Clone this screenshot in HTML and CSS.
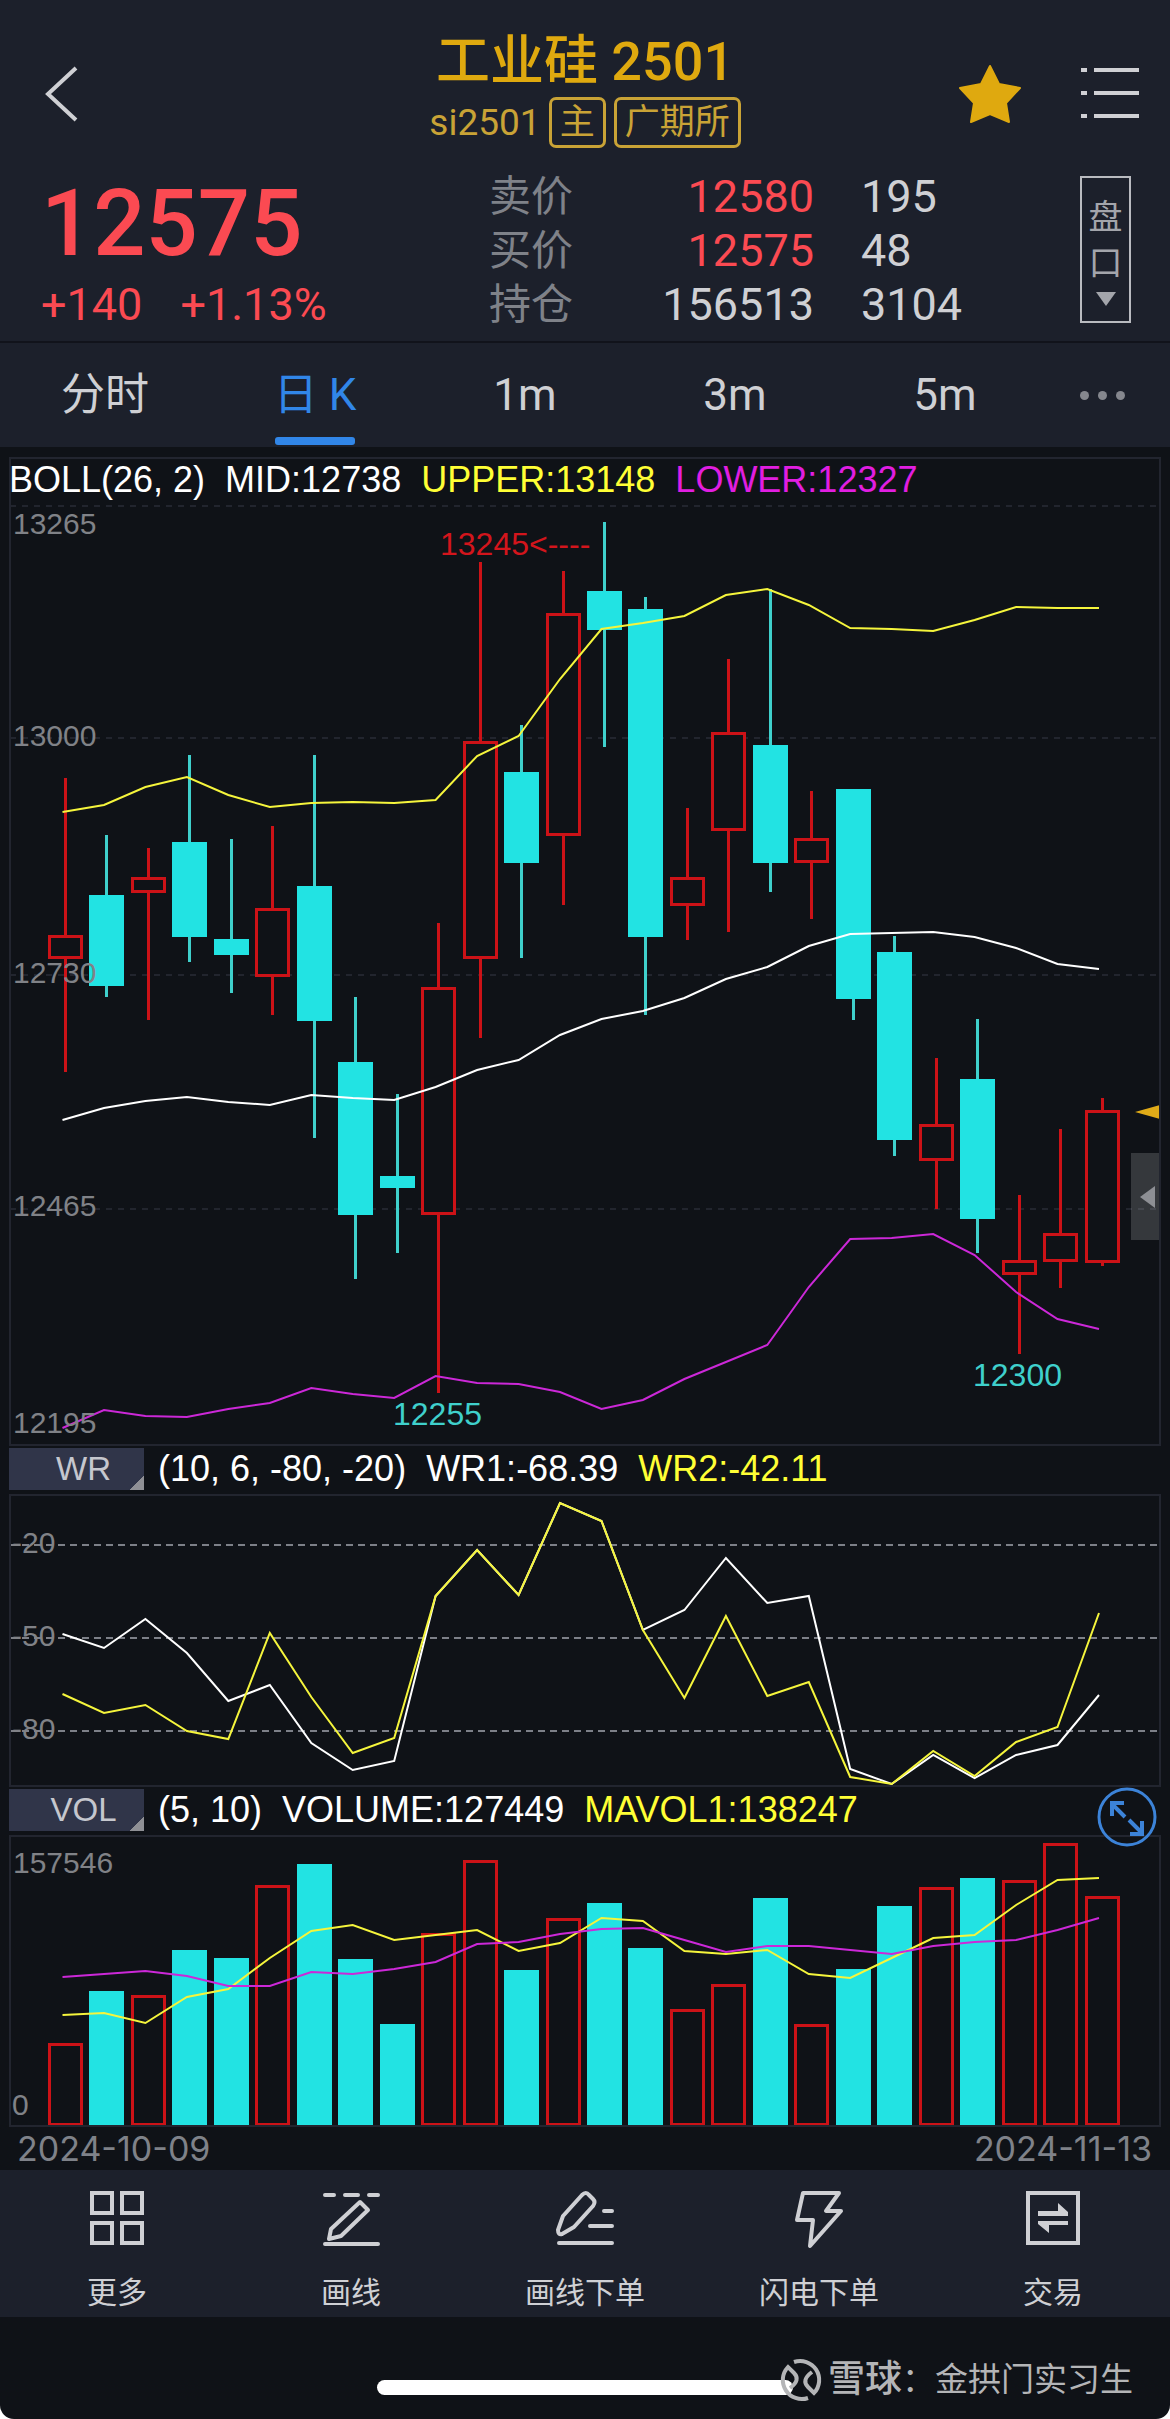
FILE: index.html
```html
<!DOCTYPE html>
<html lang="zh-CN">
<head>
    <meta charset="UTF-8">
    <meta name="viewport" content="width=device-width, initial-scale=1.0">
    <title>工业硅2501</title>
    <link rel="stylesheet" href="styles.css">
</head>
<body>
    <div class="page">
        <header class="header">
            <button class="icon-btn back" aria-label="返回">
                <svg width="60" height="60" viewBox="0 0 60 60"><path d="M46 8 L18 34 L46 60" class="line"/></svg>
            </button>
            <div class="title">
                <h1>工业硅 2501</h1>
                <div class="sub">
                    <span class="code">si2501</span>
                    <span class="tag">主</span>
                    <span class="tag">广期所</span>
                </div>
            </div>
            <div class="actions">
                <button class="icon-btn" aria-label="自选">
                    <svg width="64" height="60" viewBox="0 0 64 60"><path class="star" d="M32 6 L41 24 L62 28 L48 43 L51 62 L32 54 L13 62 L16 43 L2 28 L23 24 Z"/></svg>
                </button>
                <button class="icon-btn" aria-label="列表">
                    <svg width="60" height="60" viewBox="0 0 60 60"><path d="M1 10H7M14 10H59M1 33H7M14 33H59M1 56H7M14 56H59" class="line"/></svg>
                </button>
            </div>
        </header>

        <section class="quote">
            <div class="last">
                <div class="price">12575</div>
                <div class="change"><span>+140</span><span>+1.13%</span></div>
            </div>
            <table class="book">
                <tr><th>卖价</th><td class="num up">12580</td><td>195</td></tr>
                <tr><th>买价</th><td class="num up">12575</td><td>48</td></tr>
                <tr><th>持仓</th><td class="num">156513</td><td>3104</td></tr>
            </table>
            <button class="depth"><span>盘</span><span>口</span><i class="caret"></i></button>
        </section>

        <nav class="tabs">
            <button>分时</button>
            <button class="active">日 K</button>
            <button>1m</button>
            <button>3m</button>
            <button>5m</button>
            <button class="dots" aria-label="更多周期"><i></i><i></i><i></i></button>
        </nav>

        <main class="charts">
            <section class="panel">
                <div class="legend">
                    <span>BOLL(26, 2)</span><span>MID:12738</span><span class="yellow">UPPER:13148</span><span class="magenta">LOWER:12327</span>
                </div>
                <svg id="kline" viewBox="9 505 1152 941"></svg>
            </section>

            <div class="legend">
                <button class="indicator">WR</button>
                <span>(10, 6, -80, -20)</span><span>WR1:-68.39</span><span class="yellow">WR2:-42.11</span>
            </div>
            <section class="panel">
                <svg id="wr" viewBox="9 1494 1152 293"></svg>
            </section>

            <div class="legend">
                <button class="indicator">VOL</button>
                <span>(5, 10)</span><span>VOLUME:127449</span><span class="yellow">MAVOL1:138247</span>
                <button class="expand" aria-label="全屏">
                    <svg width="60" height="60" viewBox="0 0 60 60">
                        <circle cx="30" cy="30" r="28"/>
                        <path d="M28 30 L15 17 M15 29 V16 H27 M32 33 L45 46 M45 34 V47 H33"/>
                    </svg>
                </button>
            </div>
            <section class="panel">
                <svg id="vol" viewBox="9 1835 1152 292"></svg>
            </section>
            <div class="dates"><span>2024-10-09</span><span>2024-11-13</span></div>
        </main>

        <nav class="toolbar">
            <button>
                <svg width="60" height="60" viewBox="0 0 60 60"><path class="line" d="M5 5H25V25H5Z M35 5H55V25H35Z M5 35H25V55H5Z M35 35H55V55H35Z"/></svg>
                更多
            </button>
            <button>
                <svg width="60" height="60" viewBox="0 0 60 60"><path class="line round" d="M4 7H13M24 7H37M48 7H57M4 56H57M39 14 L47 22 L20 48 L8 51 L10 41 Z"/></svg>
                画线
            </button>
            <button>
                <svg width="60" height="60" viewBox="0 0 60 60"><path class="line round" d="M4 55H57M35 38H57M49 23H57M8 28 L27 7 Q31 3 34 7 L38 11 Q41 14 38 18 L19 39 L7 46 Q3 47 3 42 Z"/></svg>
                画线下单
            </button>
            <button>
                <svg width="60" height="60" viewBox="0 0 60 60"><path class="line round" d="M14 5H50L37 23H52L21 58L24 32H8Z"/></svg>
                闪电下单
            </button>
            <button>
                <svg width="60" height="60" viewBox="0 0 60 60">
                    <path class="line" d="M5 5H55V55H5Z"/>
                    <path class="solid" d="M15 23H35V15L45 24V28H15Z M45 37H26V45L15 36V33H45Z"/>
                </svg>
                交易
            </button>
        </nav>

        <footer class="bottom">
            <div class="home-bar"></div>
            <div class="watermark">
                <svg width="42" height="42" viewBox="0 0 42 42">
                    <path d="M14 3 A19 19 0 0 1 34 34 L28 28 Q21 21 32 13 M28 39 A19 19 0 0 1 8 8 L14 14 Q21 21 10 29"/>
                </svg>
                <span class="brand">雪球</span><span>：金拱门实习生</span>
            </div>
        </footer>
    </div>
    <script src="script.js"></script>
</body>
</html>
```

FILE: styles.css
```css
:root {
    --bar: #1c202b;
    --bg: #0f1217;
    --gold: #dfa90f;
    --gold-soft: #c9a336;
    --red: #fb4a52;
    --text: #cfd0d4;
    --muted: #7f8289;
    --blue: #3186e8;
    --frame: #22252f;
}
* {
    box-sizing: border-box;
}
body {
    margin: 0;
    background: #fff;
    font-family: Roboto, "Noto Sans CJK SC", sans-serif;
    color: var(--text);
}
button {
    padding: 0;
    border: 0;
    background: none;
    color: inherit;
    font: inherit;
    cursor: pointer;
}
.page {
    background: var(--bg);
    border-radius: 0 0 14px 14px;
    overflow: hidden;
}
svg {
    display: block;
    overflow: visible;
}
.line {
    fill: none;
    stroke: var(--text);
    stroke-width: 4;
}
.round {
    stroke-linecap: round;
    stroke-linejoin: round;
}
.solid {
    fill: var(--text);
}

/* header */
.header {
    display: grid;
    grid-template-columns: 1fr auto 1fr;
    align-items: center;
    padding: 32px 30px 0 30px;
    background: var(--bar);
}
.icon-btn {
    justify-self: start;
}
.star {
    fill: var(--gold);
    stroke: var(--gold);
    stroke-width: 2;
    stroke-linejoin: round;
}
.title h1 {
    margin: 0;
    font-size: 54px;
    line-height: 60px;
    font-weight: 500;
    text-align: center;
    color: var(--gold);
}
.sub {
    display: flex;
    justify-content: center;
    align-items: center;
    gap: 8px;
    margin-top: 5px;
    font-size: 35px;
    color: var(--gold-soft);
}
.code {
    font-size: 37px;
}
.tag {
    height: 51px;
    padding: 0 8px;
    border: 3px solid var(--gold-soft);
    border-radius: 7px;
    line-height: 45px;
}
.actions {
    display: flex;
    justify-content: flex-end;
    gap: 58px;
}

/* quote */
.quote {
    display: grid;
    grid-template-columns: 1fr 591px 51px;
    padding: 22px 39px 9px 41px;
    background: var(--bar);
}
.last {
    color: var(--red);
}
.price {
    font-size: 92px;
    line-height: 108px;
    font-weight: 500;
}
.change {
    display: flex;
    gap: 38px;
    font-size: 45px;
    line-height: 54px;
}
.book {
    border-collapse: collapse;
    font-size: 45px;
    line-height: 54px;
}
.book th, .book td {
    height: 54px;
    padding: 0;
    text-align: left;
    font-weight: normal;
}
.book th {
    width: 100px;
    font-size: 42px;
    color: var(--muted);
}
.book .num {
    width: 272px;
    padding-right: 47px;
    text-align: right;
}
.book .up {
    color: var(--red);
}
.depth {
    display: flex;
    flex-direction: column;
    align-items: center;
    justify-content: center;
    margin: 6px 0 9px;
    border: 2px solid #b9bbc0;
    font-size: 34px;
    line-height: 46px;
    color: #a3a5ab;
}
.caret {
    margin-top: 6px;
    border: 10px solid transparent;
    border-top: 14px solid #a3a5ab;
    border-bottom: 0;
}

/* period tabs */
.tabs {
    display: grid;
    grid-template-columns: repeat(5, 7fr) 4fr;
    height: 106px;
    border-top: 2px solid #11131b;
    background: var(--bar);
    font-size: 44px;
    line-height: 52px;
}
.tabs .active {
    position: relative;
    color: var(--blue);
}
.tabs .active::after {
    content: "";
    position: absolute;
    left: 50%;
    bottom: 2px;
    width: 80px;
    height: 8px;
    margin-left: -40px;
    border-radius: 3px;
    background: var(--blue);
}
.dots {
    display: flex;
    align-items: center;
    justify-content: center;
    gap: 9px;
    padding-right: 16px;
}
.dots i {
    width: 9px;
    height: 9px;
    border-radius: 50%;
    background: #85878e;
}

/* charts */
.charts {
    padding: 10px 9px 0;
    font-family: "Liberation Sans", Arial, sans-serif;
}
.panel {
    outline: 2px solid var(--frame);
    outline-offset: -2px;
}
.panel svg {
    width: 100%;
    height: auto;
}
.legend {
    position: relative;
    display: flex;
    align-items: center;
    gap: 20px;
    height: 48px;
    padding-bottom: 2px;
    font-size: 36px;
    color: #fff;
    white-space: nowrap;
}
.yellow {
    color: #ffff35;
}
.magenta {
    color: #e11ee1;
}
.indicator {
    width: 135px;
    height: 42px;
    margin-right: -6px;
    padding-left: 14px;
    background: linear-gradient(135deg, transparent 115px, #8f9095 115px) #303549;
    font-size: 33px;
    color: #c5c7ce;
}
.expand {
    position: absolute;
    right: 4px;
    top: 0;
}
.expand svg {
    fill: none;
    stroke: #3c83d8;
    stroke-width: 3;
}
.expand path {
    stroke-width: 4;
}
.dates {
    display: flex;
    justify-content: space-between;
    padding: 0 9px 0 8px;
    font-family: Inter, sans-serif;
    font-size: 34px;
    line-height: 43px;
    color: var(--muted);
}

/* chart marks */
.up-bar {
    fill: #0f1217;
    stroke: #cc1217;
    stroke-width: 3;
}
.down-bar {
    fill: #22e3e3;
}
.up-wick, .down-wick {
    stroke: #cc1217;
    stroke-width: 3;
}
.down-wick {
    stroke: #3fd0cc;
}
.curve {
    fill: none;
    stroke: #fff;
    stroke-width: 2;
}
.curve.c-yellow {
    stroke: #f5f53c;
}
.curve.c-magenta {
    stroke: #cc28d8;
}
.grid-line {
    stroke: #22252e;
    stroke-width: 2;
    stroke-dasharray: 6 6;
}
.grid-line.strong {
    stroke: #7d8088;
    stroke-dasharray: 7 5;
}
.axis {
    fill: #808287;
    font-size: 30px;
}
.mark {
    font-size: 32px;
    fill: #3fd0cc;
}
.mark.high {
    fill: #d3151c;
}
.pointer {
    fill: #e0ab18;
}
.drawer {
    fill: #fff;
    fill-opacity: 0.16;
}
.drawer-arrow {
    fill: #8d8f94;
}

/* bottom toolbar */
.toolbar {
    display: grid;
    grid-template-columns: repeat(5, 1fr);
    height: 147px;
    background: var(--bar);
    font-size: 30px;
}
.toolbar button {
    display: flex;
    flex-direction: column;
    align-items: center;
    padding-top: 18px;
    line-height: 44px;
    gap: 23px;
}
.bottom {
    position: relative;
    height: 102px;
}
.home-bar {
    position: absolute;
    left: 50%;
    bottom: 24px;
    width: 416px;
    height: 15px;
    margin-left: -208px;
    border-radius: 8px;
    background: #fff;
}
.watermark {
    position: absolute;
    right: 37px;
    bottom: 17px;
    display: flex;
    align-items: center;
    font-size: 33px;
    line-height: 44px;
    color: #b4b5b7;
}
.watermark svg {
    margin-right: 6px;
    fill: none;
    stroke: #b4b5b7;
    stroke-width: 4;
}
.brand {
    font-size: 37px;
    font-weight: 500;
}
```

FILE: script.js
```js
const STEP = 41.46;
const BAR_X = 65.5;   // centre of the first candle
const LINE_X = 62.5;

// [up?, high, body top, body bottom, low]
const candles = [
    [1, 778, 935, 959, 1072], [0, 835, 895, 986, 997], [1, 848, 877, 893, 1020],
    [0, 755, 842, 937, 962], [0, 839, 939, 955, 993], [1, 826, 908, 977, 1015],
    [0, 755, 886, 1021, 1138], [0, 997, 1062, 1215, 1279], [0, 1094, 1176, 1188, 1253],
    [1, 923, 987, 1215, 1393], [1, 562, 741, 959, 1038], [0, 725, 772, 863, 958],
    [1, 571, 613, 836, 905], [0, 522, 591, 630, 747], [0, 597, 609, 937, 1015],
    [1, 808, 877, 906, 940], [1, 659, 732, 831, 932], [0, 589, 745, 863, 892],
    [1, 791, 838, 863, 919], [0, 789, 789, 999, 1020], [0, 936, 952, 1140, 1156],
    [1, 1058, 1124, 1161, 1209], [0, 1019, 1079, 1219, 1253], [1, 1195, 1260, 1275, 1354],
    [1, 1129, 1233, 1262, 1288], [1, 1098, 1110, 1263, 1266]
];
const upper = [812, 805, 787, 777, 795, 807, 803, 802, 803, 800, 756, 736, 679, 629, 623, 616, 595, 589, 605, 628, 629, 631, 620, 607, 608, 608];
const mid = [1120, 1108, 1101, 1097, 1102, 1105, 1095, 1098, 1100, 1087, 1070, 1060, 1035, 1019, 1011, 998, 979, 967, 946, 934, 933, 932, 937, 948, 964, 969];
const lower = [1428, 1410, 1416, 1417, 1409, 1403, 1388, 1394, 1398, 1376, 1383, 1384, 1392, 1409, 1400, 1379, 1362, 1345, 1287, 1239, 1238, 1234, 1255, 1292, 1319, 1329];

const wr1 = [1634, 1648, 1619, 1653, 1701, 1685, 1743, 1770, 1761, 1596, 1550, 1595, 1503, 1521, 1630, 1610, 1558, 1603, 1596, 1769, 1784, 1755, 1778, 1755, 1745, 1695];
const wr2 = [1694, 1713, 1705, 1731, 1739, 1633, 1697, 1753, 1738, 1596, 1550, 1595, 1503, 1521, 1630, 1698, 1616, 1696, 1682, 1777, 1784, 1751, 1776, 1742, 1727, 1613];

const volume = [2043, 1991, 1995, 1950, 1958, 1885, 1864, 1959, 2024, 1933, 1860, 1970, 1918, 1903, 1948, 2009, 1984, 1898, 2024, 1969, 1906, 1887, 1878, 1880, 1843, 1896];
const ma1 = [2015, 2013, 2023, 1997, 1989, 1958, 1931, 1925, 1940, 1935, 1930, 1951, 1943, 1918, 1921, 1951, 1954, 1950, 1974, 1978, 1958, 1938, 1935, 1905, 1880, 1878];
const ma2 = [1977, 1974, 1971, 1976, 1986, 1986, 1972, 1974, 1969, 1962, 1944, 1942, 1934, 1929, 1928, 1940, 1952, 1946, 1946, 1950, 1954, 1946, 1942, 1940, 1930, 1918];

function bar(i, up, top, bottom) {
    const x = Math.round(BAR_X + i * STEP - 17.5);
    if (up) {
        return `<rect class="up-bar" x="${x + 1.5}" y="${top + 1.5}" width="32" height="${bottom - top - 3}"/>`;
    }
    return `<rect class="down-bar" x="${x}" y="${top}" width="35" height="${bottom - top}"/>`;
}

function wick(i, up, high, low) {
    const x = Math.round(BAR_X + i * STEP - 17.5) + 17.5;
    return `<line class="${up ? 'up' : 'down'}-wick" x1="${x}" x2="${x}" y1="${high}" y2="${low}"/>`;
}

function curve(values, cls) {
    const points = values.map((y, i) => `${(LINE_X + i * STEP).toFixed(1)},${y}`).join(' ');
    return `<polyline class="curve ${cls}" points="${points}"/>`;
}

function gridLine(y, cls = '') {
    return `<line class="grid-line ${cls}" x1="10" x2="1159" y1="${y}" y2="${y}"/>`;
}

function text(x, y, value, cls = 'axis') {
    return `<text class="${cls}" x="${x}" y="${y}">${value}</text>`;
}

document.getElementById('kline').innerHTML =
    [506, 738, 975, 1209].map(y => gridLine(y)).join('') +
    candles.map(([up, high, top, bottom, low], i) => wick(i, up, high, low) + bar(i, up, top, bottom)).join('') +
    curve(mid, '') + curve(upper, 'c-yellow') + curve(lower, 'c-magenta') +
    text(13, 534, '13265') + text(13, 746, '13000') + text(13, 983, '12730') + text(13, 1216, '12465') + text(13, 1433, '12195') +
    text(440, 555, '13245&lt;----', 'mark high') + text(393, 1425, '12255', 'mark') + text(973, 1386, '12300', 'mark') +
    '<path class="pointer" d="M1135 1112 L1160 1105 V1119 Z"/>' +
    '<rect class="drawer" x="1131" y="1153" width="30" height="87"/>' +
    '<path class="drawer-arrow" d="M1140 1197 L1155 1186 V1208 Z"/>';

document.getElementById('wr').innerHTML =
    [1545, 1638, 1731].map(y => gridLine(y, 'strong')).join('') +
    curve(wr1, '') + curve(wr2, 'c-yellow') +
    text(12, 1553, '-20') + text(12, 1646, '-50') + text(12, 1739, '-80');

document.getElementById('vol').innerHTML =
    volume.map((top, i) => bar(i, candles[i][0], top, 2126)).join('') +
    curve(ma1, 'c-yellow') + curve(ma2, 'c-magenta') +
    text(13, 1873, '157546') + text(12, 2115, '0');
```
